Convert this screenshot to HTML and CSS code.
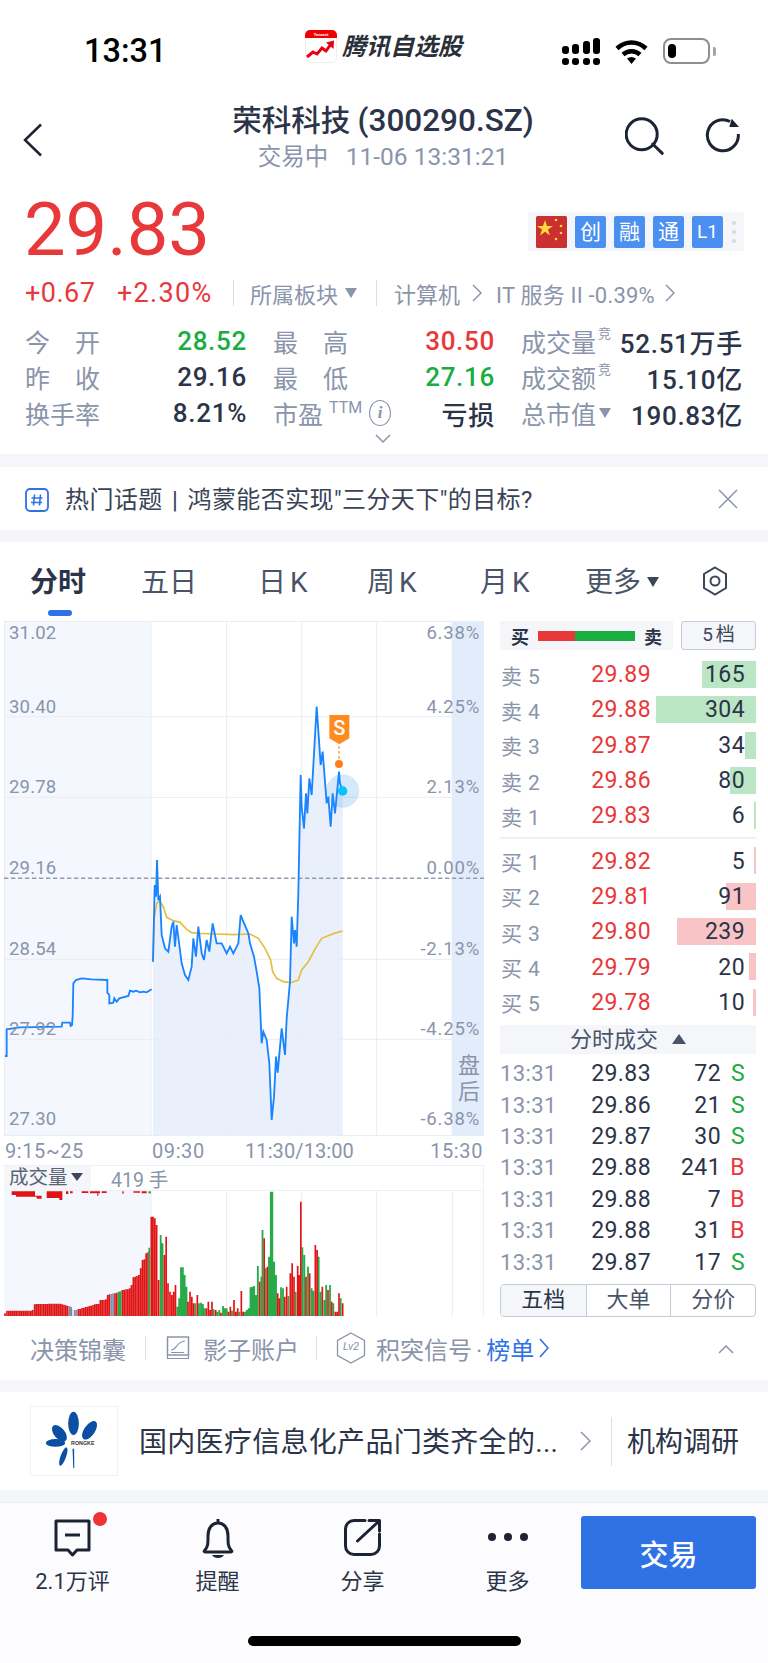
FILE: index.html
```html
<!DOCTYPE html>
<html lang="zh-CN">
<head>
<meta charset="utf-8">
<title>荣科科技</title>
<link rel="stylesheet" href="styles.css">
</head>
<body>
<div class="page">
  <header class="status">
    <span class="clock">13:31</span>
    <div class="brand">
      <svg class="brand-icon" viewBox="0 0 32 33">
        <rect x=".5" y=".5" width="31" height="32" rx="5" fill="#fff" stroke="#eeeeee"/>
        <path d="M0 8V5a5 5 0 0 1 5-5h22a5 5 0 0 1 5 5v3z" fill="#f00000"/>
        <text x="16" y="6" class="brand-mini" text-anchor="middle">Tencent</text>
        <path d="M2 27L8 22 12 24 17 18 21 21 26 14" fill="none" stroke="#e60012" stroke-width="3"/>
        <path d="M21 12.500l8-2-.5 8.500z" fill="#e60012"/>
      </svg>
      <span class="brand-name">腾讯自选股</span>
    </div>
    <svg class="signal" viewBox="0 0 38 27">
      <g fill="#000">
        <rect x="0" y="20" width="7" height="7" rx="3"/><rect x="10" y="20" width="7" height="7" rx="3"/><rect x="21" y="20" width="7" height="7" rx="3"/><rect x="31" y="20" width="7" height="7" rx="3"/>
        <rect x="0" y="8" width="7" height="8" rx="3"/><rect x="10" y="6" width="7" height="10" rx="3"/><rect x="21" y="3" width="7" height="13" rx="3"/><rect x="31" y="0" width="7" height="16" rx="3"/>
      </g>
    </svg>
    <svg class="wifi" viewBox="0 0 33 25">
      <path d="M2 9.500C10.500 1.500 22.500 1.500 31 9.500" fill="none" stroke="#000" stroke-width="4.500"/>
      <path d="M8 15.500C13 11 20 11 25 15.500" fill="none" stroke="#000" stroke-width="4.500"/>
      <path d="M12 19.500C15 17.500 18 17.500 21 19.500L16.500 25z" fill="#000"/>
    </svg>
    <div class="battery"><span class="battery-level"></span></div>
    <span class="battery-tip"></span>
  </header>

  <nav class="nav">
    <svg class="back" viewBox="0 0 20 34"><path d="M18 1.500L2 17l16 15.500" fill="none" stroke="#1c2333" stroke-width="2.500"/></svg>
    <div class="nav-title">
      <div class="stock-name">荣科科技 <span class="stock-code">(300290.SZ)</span></div>
      <div class="stock-sub">交易中 &nbsp; <span class="stock-time">11-06 13:31:21</span></div>
    </div>
    <svg class="nav-search" viewBox="0 0 40 40"><circle cx="16.700" cy="17.300" r="15.500" fill="none" stroke="#1c2333" stroke-width="3"/><path d="M27.700 27l9.600 9.300" stroke="#1c2333" stroke-width="3" stroke-linecap="round"/></svg>
    <svg class="nav-refresh" viewBox="0 0 36 38"><path d="M25 4.500A15.500 15.500 0 1 0 33.300 17" fill="none" stroke="#1c2333" stroke-width="3"/><path d="M26.700 1.700L34 10H24.300z" fill="#1c2333"/></svg>
  </nav>

  <section class="quote">
    <div class="price-row">
      <div class="price">29.83</div>
      <div class="tags">
        <svg class="flag" viewBox="0 0 31 32"><rect width="31" height="32" rx="1.500" fill="#c9302f"/><path d="M9 4l2 6h6l-5 3.500 2 6-5-3.700-5 3.700 2-6L1 10h6z" fill="#ffd93b"/><g fill="#ffd93b"><circle cx="20" cy="4" r="1.300"/><circle cx="25" cy="10" r="1.300"/><circle cx="25" cy="17" r="1.300"/><circle cx="20" cy="23" r="1.300"/></g></svg>
        <span class="chip">创</span><span class="chip">融</span><span class="chip">通</span><span class="chip chip-l">L1</span>
        <span class="tag-more"><i></i><i></i><i></i></span>
      </div>
    </div>
    <div class="change-row">
      <span class="chg">+0.67</span>
      <span class="chg chg-pct">+2.30%</span>
      <span class="sep sep-a"></span>
      <span class="sector">所属板块</span><span class="caret"></span>
      <span class="sep sep-b"></span>
      <span class="sector sector-b">计算机</span><svg class="mini-chev chev-a" viewBox="0 0 10 18"><path d="M1 1l8 8-8 8" fill="none" stroke="#8a94ab" stroke-width="1.500"/></svg>
      <span class="sector sector-c">IT 服务 II -0.39%</span><svg class="mini-chev chev-b" viewBox="0 0 10 18"><path d="M1 1l8 8-8 8" fill="none" stroke="#8a94ab" stroke-width="1.500"/></svg>
    </div>
    <div class="stats">
      <div class="stat"><span class="lbl lbl-j">今 开</span><span class="val up-g">28.52</span></div>
      <div class="stat"><span class="lbl lbl-j">最 高</span><span class="val up-r">30.50</span></div>
      <div class="stat"><span class="lbl">成交量<sup class="sup">竞</sup></span><span class="val">52.51万手</span></div>
      <div class="stat"><span class="lbl lbl-j">昨 收</span><span class="val">29.16</span></div>
      <div class="stat"><span class="lbl lbl-j">最 低</span><span class="val up-g">27.16</span></div>
      <div class="stat"><span class="lbl">成交额<sup class="sup">竞</sup></span><span class="val">15.10亿</span></div>
      <div class="stat"><span class="lbl">换手率</span><span class="val">8.21%</span></div>
      <div class="stat"><span class="lbl">市盈<span class="ttm">TTM</span><span class="info">i</span></span><span class="val">亏损</span></div>
      <div class="stat"><span class="lbl">总市值<span class="caret caret-s"></span></span><span class="val">190.83亿</span></div>
    </div>
    <svg class="expand" viewBox="0 0 16 10"><path d="M1 1l7 7 7-7" fill="none" stroke="#8a94ab" stroke-width="1.500"/></svg>
  </section>

  <div class="gap gap-13"></div>

  <section class="topic">
    <svg class="topic-icon" viewBox="0 0 24 24"><rect x="1" y="1" width="22" height="22" rx="4" fill="none" stroke="#2f72e6" stroke-width="1.800"/><path d="M9.500 6.500l-1 11M15.500 6.500l-1 11M6.500 10h11M6 14.500h11" stroke="#2f72e6" stroke-width="1.600"/></svg>
    <span class="topic-text">热门话题 | 鸿蒙能否实现"三分天下"的目标?</span>
    <svg class="topic-close" viewBox="0 0 20 20"><path d="M1 1l18 18M19 1L1 19" stroke="#8a94ab" stroke-width="1.500"/></svg>
  </section>

  <div class="gap gap-12"></div>

  <div class="tabs">
    <span class="tab tab-on">分时</span>
    <span class="tab">五日</span>
    <span class="tab">日 K</span>
    <span class="tab">周 K</span>
    <span class="tab">月 K</span>
    <span class="tab">更多<span class="caret caret-d"></span></span>
    <svg class="tab-set" viewBox="0 0 26 30"><path d="M13 1.500l11 6.500v14l-11 6.500L2 22V8z" fill="none" stroke="#3d4659" stroke-width="2"/><circle cx="13" cy="15" r="4.500" fill="none" stroke="#3d4659" stroke-width="2"/></svg>
  </div>

  <main class="market">
    <div class="left">
      <div class="chart">
        <svg class="chart-svg" viewBox="12 33 1440 1545">
          <rect x="12" y="33" width="441" height="1545" fill="#f4f7fd"/>
          <rect x="1355" y="33" width="97" height="1545" fill="#e2edfc"/>
          <path d="M459 1578L459 1055 464 825 468 860 471 750 475 870 480 860 485 975 495 1015 505 1025 515 950 520 935 525 1010 530 945 538 1005 545 1060 555 1095 565 1110 575 1070 580 985 588 1040 595 950 605 1030 612 1050 620 990 628 1025 638 940 650 1000 665 1000 680 1030 690 1010 700 1030 715 1000 722 915 730 935 745 970 750 1000 762 1040 770 1085 778 1135 785 1300 790 1265 800 1290 808 1360 815 1530 822 1460 828 1340 833 1388 845 1255 855 1335 860 1225 870 1115 875 920 882 1000 885 960 890 1010 895 850 902 495 905 590 912 655 918 550 922 610 928 505 935 555 950 290 962 465 968 425 980 580 985 560 992 650 998 550 1005 610 1017 485 1020 520 1028 543V1578z" fill="#e9f0fc"/>
          <path d="M453 33V1578M680 33V1578M905 33V1578M1130 33V1578M12 320H1452M12 562H1452M12 1048H1452M12 1288H1452" stroke="#e9ecf3" stroke-width="3" fill="none"/>
          <rect x="13.500" y="34.500" width="1437" height="1542" fill="none" stroke="#e9ecf3" stroke-width="3"/>
          <path d="M12 805H1452" stroke="#939bae" stroke-width="4.500" stroke-dasharray="13 8" fill="none"/>
          <path d="M15 1338H20V1258L60 1252 185 1250 187 1238H210L212 1248 216 1245 218 1218 220 1120 228 1110 245 1105 275 1108 322 1110V1148L328 1155V1180L340 1178 343 1165 350 1175 358 1165 385 1158 390 1142 400 1145 408 1142 420 1147 430 1145 440 1147 455 1138" fill="none" stroke="#1a84ff" stroke-width="5.500"/>
          <path d="M459 1055L462 930 470 880 478 872 490 890 500 922 520 932 540 937 560 958 575 968 600 970 650 972 700 974 750 972 775 985 795 1015 812 1050 818 1085 830 1105 850 1115 872 1118 895 1110 905 1080 925 1055 948 1012 965 985 990 975 1010 968 1028 963" fill="none" stroke="#e2bf3d" stroke-width="5"/>
          <path d="M459 1055L464 825 468 860 471 750 475 870 480 860 485 975 495 1015 505 1025 515 950 520 935 525 1010 530 945 538 1005 545 1060 555 1095 565 1110 575 1070 580 985 588 1040 595 950 605 1030 612 1050 620 990 628 1025 638 940 650 1000 665 1000 680 1030 690 1010 700 1030 715 1000 722 915 730 935 745 970 750 1000 762 1040 770 1085 778 1135 785 1300 790 1265 800 1290 808 1360 815 1530 822 1460 828 1340 833 1388 845 1255 855 1335 860 1225 870 1115 875 920 882 1000 885 960 890 1010 895 850 902 495 905 590 912 655 918 550 922 610 928 505 935 555 950 290 962 465 968 425 980 580 985 560 992 650 998 550 1005 610 1017 485 1020 520 1028 543" fill="none" stroke="#1a84ff" stroke-width="5.500"/>
          <circle cx="1028" cy="543" r="50" fill="#2f8fe6" fill-opacity=".2"/>
          <circle cx="1028" cy="543" r="14" fill="#00c3ff"/>
          <path d="M988 315H1048V385L1018 403 988 385z" fill="#ff8a1f"/>
          <text x="1018" y="376" class="flag-s" text-anchor="middle">S</text>
          <path d="M1017 408V450" stroke="#ff9c4a" stroke-width="4" stroke-dasharray="9 6"/>
          <circle cx="1017" cy="462" r="12" fill="#ff7f1f"/>
        </svg>
        <span class="ax ax-l ay1">31.02</span><span class="ax ax-l ay2">30.40</span><span class="ax ax-l ay3">29.78</span><span class="ax ax-l ay4">29.16</span><span class="ax ax-l ay5">28.54</span><span class="ax ax-l ay6">27.92</span><span class="ax ax-l ay7">27.30</span>
        <span class="ax ax-r ay1">6.38%</span><span class="ax ax-r ay2">4.25%</span><span class="ax ax-r ay3">2.13%</span><span class="ax ax-r ay4">0.00%</span><span class="ax ax-r ay5">-2.13%</span><span class="ax ax-r ay6">-4.25%</span><span class="ax ax-r ay7">-6.38%</span>
        <span class="after">盘后</span>
      </div>
      <div class="axis">
        <span class="t t1">9:15~25</span><span class="t t2">09:30</span><span class="t t3">11:30/13:00</span><span class="t t4">15:30</span>
      </div>
      <div class="vol-head"><span class="vol-sel">成交量<span class="caret caret-v"></span></span><span class="vol-val">419 手</span></div>
      <svg class="vol" viewBox="12 93 1440 375">
        <rect x="12" y="93" width="441" height="375" fill="#f4f7fd"/>
        <path d="M453 93V468M680 93V468M905 93V468M1130 93V468M1357 93V468M1451 93V468" stroke="#e9ecf3" stroke-width="3"/>
        <path d="M15 468V460M21 468V452M26.500 468V452M32 468V452M37.500 468V452M43 468V452M48.500 468V452M54 468V452M59.500 468V452M65 468V452M70.500 468V452M76 468V452M81.500 468V452M87 468V452M92.500 468V452M98 468V450M104 468V433M109.500 468V432M115 468V432M120.500 468V432M126 468V432M131.500 468V432M137 468V432M142.500 468V432M148 468V431M153.500 468V431M159 468V431M164.500 468V431M170 468V431M175.500 468V431M181 468V431M186.500 468V433M192 468V434M197.500 468V436M203 468V438M214 468V446M235 468V447M240.500 468V447M246 468V444M251.500 468V443M257 468V441M262.500 468V440M268 468V438M273.500 468V437M279 468V435M284.500 468V433M290 468V432M295.500 468V432M301 468V420M306.500 468V420M312 468V420M317.500 468V418M323 468V405M328.500 468V403M345 468V400M350.500 468V398M367 468V390M372.500 468V389M378 468V388M383.500 468V388M389 468V385M394.500 468V375M400 468V352M405.500 468V350M411 468V348M416.500 468V345M422 468V325M427.500 468V300M433 468V298M438.500 468V280M444 468V277" stroke="#e01414" stroke-width="5" fill="none"/>
        <path d="M208 468V439M213 468V440M224 468V450M229.500 468V450M334 468V402M339.500 468V400" stroke="#8190ad" stroke-width="5" fill="none"/>
        <path d="M356 468V395M361.500 468V394" stroke="#27ab4a" stroke-width="5.500" fill="none"/>
        <path d="M35 94H105V107H125V116H110V110H48V105H35zM140 94H187V120H178V114H140zM198 94H205V102H198zM210 94H218V100H210zM245 94H265V99H245zM270 94H300V100H295V108H292V100H270zM305 94H320V99H305zM367 94H371V101H367zM400 94H420V98H400zM425 94H440V100H425z" fill="#e01414"/>
        <path d="M445 94H453V100H445z" fill="#27ab4a"/>
        <path d="M448 468V263M482 468V225M487.500 468V250M532 468V440M537.500 468V415M543 468V322M548.500 468V322M554 468V345M559.500 468V380M586 468V430M597 468V430M603 468V428M608.500 468V432M614 468V445M641 468V448M652 468V455M658 468V450M669 468V438M674.500 468V445M680 468V445M696 468V452M718 468V455M735 468V455M740.500 468V450M746 468V445M751.500 468V382M757 468V380M762.500 468V378M768 468V405M773.500 468V318M784 468V350M787.500 468V210M797 468V325M807 468V290M812.500 468V95M817 468V95M822.500 468V305M828 468V345M843 468V382M849 468V385M865 468V408M887 468V395M907 468V262M913 468V285M924 468V320M935 468V385M940.500 468V392M956 468V290M962 468V395M973 468V420M978.500 468V375M990 468V375M1000 468V430M1022 468V415" stroke="#27ab4a" stroke-width="5.500" fill="none"/>
        <path d="M454 468V170M459 468V170M464.500 468V175M470 468V195M476 468V360M493 468V285M498.500 468V230M504 468V370M510 468V395M515.500 468V405M521 468V395M526.500 468V375M564 468V425M570 468V395M575.500 468V410M581 468V430M592 468V405M619 468V445M625 468V425M630.500 468V450M636 468V425M647 468V450M663 468V458M685 468V455M691 468V440M702 468V420M707.500 468V455M713 468V445M724 468V393M729.500 468V455M779 468V365M792.500 468V235M802 468V320M833 468V400M838.500 468V415M854 468V410M860 468V380M871 468V340M876.500 468V310M882 468V350M893 468V318M898 468V345M902.500 468V125M918 468V350M929 468V340M946 468V255M951.500 468V270M967 468V380M984 468V390M995 468V425M1006 468V455M1011.500 468V455M1017 468V400M1028 468V430" stroke="#e01414" stroke-width="5" fill="none"/>
      </svg>
    </div>

    <aside class="right">
      <div class="book-top">
        <div class="ratio"><span class="ratio-t">买</span><span class="ratio-bar"><i class="rb-r"></i><i class="rb-g"></i></span><span class="ratio-t">卖</span></div>
        <span class="levels">5 档</span>
      </div>
      <div class="book book-ask">
        <div class="lv"><i class="bar bar-g" style="width:54px"></i><span class="lv-n">卖 5</span><span class="lv-p">29.89</span><span class="lv-q">165</span></div>
        <div class="lv"><i class="bar bar-g" style="width:100px"></i><span class="lv-n">卖 4</span><span class="lv-p">29.88</span><span class="lv-q">304</span></div>
        <div class="lv"><i class="bar bar-g" style="width:11px"></i><span class="lv-n">卖 3</span><span class="lv-p">29.87</span><span class="lv-q">34</span></div>
        <div class="lv"><i class="bar bar-g" style="width:26px"></i><span class="lv-n">卖 2</span><span class="lv-p">29.86</span><span class="lv-q">80</span></div>
        <div class="lv"><i class="bar bar-g" style="width:2px"></i><span class="lv-n">卖 1</span><span class="lv-p">29.83</span><span class="lv-q">6</span></div>
      </div>
      <div class="book-sep"></div>
      <div class="book">
        <div class="lv"><i class="bar bar-r" style="width:2px"></i><span class="lv-n">买 1</span><span class="lv-p">29.82</span><span class="lv-q">5</span></div>
        <div class="lv"><i class="bar bar-r" style="width:30px"></i><span class="lv-n">买 2</span><span class="lv-p">29.81</span><span class="lv-q">91</span></div>
        <div class="lv"><i class="bar bar-r" style="width:79px"></i><span class="lv-n">买 3</span><span class="lv-p">29.80</span><span class="lv-q">239</span></div>
        <div class="lv"><i class="bar bar-r" style="width:7px"></i><span class="lv-n">买 4</span><span class="lv-p">29.79</span><span class="lv-q">20</span></div>
        <div class="lv"><i class="bar bar-r" style="width:3px"></i><span class="lv-n">买 5</span><span class="lv-p">29.78</span><span class="lv-q">10</span></div>
      </div>
      <div class="trade-head">分时成交<span class="caret-up"></span></div>
      <div class="trades">
        <div class="tr"><span class="tr-t">13:31</span><span class="tr-p">29.83</span><span class="tr-q">72</span><span class="tr-s up-g">S</span></div>
        <div class="tr"><span class="tr-t">13:31</span><span class="tr-p">29.86</span><span class="tr-q">21</span><span class="tr-s up-g">S</span></div>
        <div class="tr"><span class="tr-t">13:31</span><span class="tr-p">29.87</span><span class="tr-q">30</span><span class="tr-s up-g">S</span></div>
        <div class="tr"><span class="tr-t">13:31</span><span class="tr-p">29.88</span><span class="tr-q">241</span><span class="tr-s up-r">B</span></div>
        <div class="tr"><span class="tr-t">13:31</span><span class="tr-p">29.88</span><span class="tr-q">7</span><span class="tr-s up-r">B</span></div>
        <div class="tr"><span class="tr-t">13:31</span><span class="tr-p">29.88</span><span class="tr-q">31</span><span class="tr-s up-r">B</span></div>
        <div class="tr"><span class="tr-t">13:31</span><span class="tr-p">29.87</span><span class="tr-q">17</span><span class="tr-s up-g">S</span></div>
      </div>
      <div class="seg"><span class="seg-i seg-on">五档</span><span class="seg-i">大单</span><span class="seg-i">分价</span></div>
    </aside>
  </main>

  <section class="strip">
    <span class="strip-t strip-a">决策锦囊</span>
    <span class="strip-sep"></span>
    <svg class="strip-doc" viewBox="0 0 24 24"><rect x="1.500" y="1" width="21" height="18" fill="none" stroke="#8a94ab" stroke-width="1.500"/><path d="M1.500 19v3.500h21V19M5 14c6 0 5-8 14-9M5 16.500h13" fill="none" stroke="#8a94ab" stroke-width="1.200"/></svg>
    <span class="strip-t">影子账户</span>
    <span class="strip-sep strip-sep-b"></span>
    <span class="hexlv"><svg class="hex" viewBox="0 0 30 32"><path d="M15 1l13.500 7.500v15L15 31 1.500 23.500v-15z" fill="none" stroke="#8a94ab" stroke-width="1.300"/></svg><em class="lv2">Lv2</em></span>
    <span class="strip-t">积突信号<span class="dot">·</span><a class="blue">榜单</a></span>
    <svg class="blue-chev" viewBox="0 0 10 20"><path d="M1 1l8 9-8 9" fill="none" stroke="#2f72e6" stroke-width="1.600"/></svg>
    <svg class="strip-up" viewBox="0 0 16 9"><path d="M1 8l7-7 7 7" fill="none" stroke="#8a94ab" stroke-width="1.500"/></svg>
  </section>

  <div class="gap gap-12"></div>

  <section class="feed">
    <div class="logo">
      <svg viewBox="0 0 88 70">
        <g fill="#0b4ea2">
          <ellipse cx="43.500" cy="17" rx="5.500" ry="12"/>
          <ellipse cx="29" cy="27" rx="5.500" ry="10" transform="rotate(-40 29 27)"/>
          <ellipse cx="60" cy="24" rx="5.500" ry="11" transform="rotate(35 60 24)"/>
          <ellipse cx="25" cy="37" rx="10" ry="4"/>
          <ellipse cx="33" cy="51" rx="2.800" ry="10" transform="rotate(20 33 51)"/>
          <path d="M42.500 43h1.600l.2 20h-1z"/>
        </g>
        <text x="41" y="39" class="logo-t">RONGKE</text>
      </svg>
    </div>
    <span class="feed-text">国内医疗信息化产品门类齐全的...</span>
    <svg class="feed-chev" viewBox="0 0 11 20"><path d="M1 1l9 9-9 9" fill="none" stroke="#8a94ab" stroke-width="1.500"/></svg>
    <span class="feed-sep"></span>
    <span class="feed-tag">机构调研</span>
  </section>

  <div class="gap gap-12"></div>

  <footer class="tabbar">
    <div class="bar-item">
      <span class="bar-ico">
        <svg class="ico-c" viewBox="0 0 40 38"><path d="M3 2h33v29H24l-4.500 5-4.500-5H3z" fill="none" stroke="#1c2333" stroke-width="3" stroke-linejoin="round"/><path d="M12 16h15" stroke="#1c2333" stroke-width="3"/></svg>
        <i class="red-dot"></i>
      </span>
      <span class="bar-lbl">2.1万评</span>
    </div>
    <div class="bar-item">
      <span class="bar-ico">
        <svg class="ico-b" viewBox="0 0 40 42"><path d="M20 2v3M7 33c3-3 3-7 3-14 0-8 4-13 10-13s10 5 10 13c0 7 0 11 3 14 1.500 1.500 1 2-1 2H8c-2 0-2.500-.5-1-2z" fill="none" stroke="#1c2333" stroke-width="3"/><path d="M14 38h12c-2 4-10 4-12 0z" fill="#1c2333"/></svg>
      </span>
      <span class="bar-lbl">提醒</span>
    </div>
    <div class="bar-item">
      <span class="bar-ico">
        <svg class="ico-s" viewBox="0 0 38 38"><g fill="none" stroke="#1c2333" stroke-width="3" stroke-linecap="round" stroke-linejoin="round"><path d="M21 1.500H10A8.500 8.500 0 0 0 1.500 10V27a8.500 8.500 0 0 0 8.500 8.500H27A8.500 8.500 0 0 0 35.500 27V15"/><path d="M13.500 22L33 4"/><path d="M25 1.500H35.500V12"/></g></svg>
      </span>
      <span class="bar-lbl">分享</span>
    </div>
    <div class="bar-item">
      <span class="bar-ico">
        <svg class="ico-m" viewBox="0 0 42 10"><circle cx="5" cy="5" r="4" fill="#1c2333"/><circle cx="21" cy="5" r="4" fill="#1c2333"/><circle cx="37" cy="5" r="4" fill="#1c2333"/></svg>
      </span>
      <span class="bar-lbl">更多</span>
    </div>
    <button class="trade-btn">交易</button>
    <span class="home"></span>
  </footer>
</div>
</body>
</html>
```

FILE: styles.css
```css
* { box-sizing: border-box; }
html, body { margin: 0; padding: 0; background: #fff; }
body { font-family: Roboto, "Noto Sans CJK SC", sans-serif; color: #2b3448; }
.page { width: 768px; height: 1663px; overflow: hidden; position: relative; background: #fff; }
svg { display: block; }
i { display: block; }

.up-g { color: #1aad3f; }
.up-r { color: #e8383a; }

.status { height: 96px; display: flex; align-items: flex-start; position: relative; }
.clock { margin: 33px 0 0 84px; font: 500 32.500px/36px Roboto, sans-serif; color: #000; width: 221px; }
.brand { display: flex; align-items: flex-start; margin-top: 30px; width: 257px; }
.brand-icon { width: 32px; height: 33px; }
.brand-mini { font: 700 4px Roboto, sans-serif; fill: #fff; }
.brand-name { margin: -1px 0 0 5px; font: italic 700 24px/32px "Noto Sans CJK SC", sans-serif; color: #2b2f3a; white-space: nowrap; }
.signal { width: 38px; height: 27px; margin-top: 38px; }
.wifi { width: 33px; height: 25px; margin: 39px 0 0 15px; }
.battery { width: 47px; height: 26px; margin: 38px 0 0 15px; border: 2px solid #8e8e8e; border-radius: 8px; padding: 4px 0 0 3px; }
.battery-level { display: block; width: 8px; height: 14px; border-radius: 4px; background: #000; }
.battery-tip { width: 3px; height: 9px; margin: 47px 0 0 3px; background: #a5a5a5; border-radius: 0 2px 2px 0; }

.nav { height: 80px; position: relative; }
.back { position: absolute; left: 23px; top: 27px; width: 20px; height: 34px; }
.nav-title { text-align: center; padding-top: 7px; margin-left: -2px; }
.stock-name { font-size: 29.500px; line-height: 36px; font-weight: 500; color: #2b3448; }
.stock-code { font-size: 31.500px; }
.stock-sub { font-size: 23.500px; line-height: 30px; color: #8a94ab; margin-top: 3px; }
.stock-time { font-size: 24.500px; }
.nav-search { position: absolute; left: 625px; top: 21px; width: 40px; height: 40px; }
.nav-refresh { position: absolute; left: 705px; top: 21px; width: 36px; height: 38px; }

.quote { height: 278px; position: relative; }
.price-row { display: flex; justify-content: space-between; height: 97px; padding: 19px 24px 0 24px; }
.price { font-size: 74px; line-height: 70px; color: #e8383a; }
.tags { width: 216px; height: 39px; margin-top: 17px; background: #f4f6fa; display: flex; gap: 8px; align-items: center; padding-left: 8px; }
.flag { width: 31px; height: 32px; }
.chip { width: 31px; height: 32px; border-radius: 2px; background: #4b8ff0; color: #fff; font-size: 21px; line-height: 32px; text-align: center; }
.chip-l { font-size: 19px; }
.tag-more { display: flex; flex-direction: column; gap: 5px; margin-left: 1px; }
.tag-more i { width: 4px; height: 4px; border-radius: 50%; background: #d4d8e0; }

.change-row { height: 40px; display: flex; align-items: center; padding-left: 25px; }
.chg { font-size: 27px; letter-spacing: .5px; color: #e8383a; width: 70px; white-space: nowrap; }
.chg-pct { margin-left: 22px; width: 97px; letter-spacing: 1.300px; }
.sep { width: 1px; height: 26px; background: #d9dde5; }
.sep-a { margin: 0 16px 0 19px; }
.sep-b { margin: 0 17px 0 19px; }
.sector { font-size: 22px; color: #8a94ab; white-space: nowrap; }
.sector-c { letter-spacing: .2px; }
.caret { display: inline-block; width: 0; height: 0; margin-left: 7px; border-left: 6.500px solid transparent; border-right: 6.500px solid transparent; border-top: 10px solid #8a94ab; }
.mini-chev { width: 10px; height: 18px; }
.chev-a { margin: 0 14px 0 12px; }
.chev-b { margin-left: 10px; }

.stats { display: grid; grid-template-columns: 222px 222px 222px; grid-auto-rows: 36px; column-gap: 26px; padding: 10px 0 0 25px; }
.stat { display: flex; justify-content: space-between; align-items: center; white-space: nowrap; }
.lbl { font-size: 25px; color: #8a94ab; display: inline-flex; align-items: center; position: relative; }
.lbl-j { width: 75px; display: inline-block; text-align-last: justify; }
.val { font-size: 26px; letter-spacing: .7px; font-weight: 500; }
.sup { font-size: 13px; line-height: 13px; align-self: flex-start; margin: 4px 0 0 2px; }
.ttm { font-size: 16px; margin-left: 6px; align-self: flex-start; margin-top: 3px; line-height: 20px; }
.info { width: 22px; height: 26px; border: 1.500px solid #8a94ab; border-radius: 50%; margin-left: 7px; font: italic 700 17px/23px "Liberation Serif", serif; text-align: center; }
.caret-s { margin-left: 3px; }
.expand { position: absolute; left: 375px; top: 258px; width: 16px; height: 10px; }

.gap { background: #f4f6fa; }
.gap-13 { height: 13px; }
.gap-12 { height: 12px; }

.topic { height: 63px; display: flex; align-items: center; padding-left: 25px; position: relative; }
.topic-icon { width: 24px; height: 24px; margin-top: 2px; }
.topic-text { margin: -3px 0 0 16px; font-size: 24px; letter-spacing: .4px; word-spacing: 3px; color: #3a4356; white-space: nowrap; }
.topic-close { position: absolute; left: 718px; top: 22px; width: 20px; height: 20px; }

.tabs { height: 79px; display: grid; grid-template-columns: 111px 117px 109px 113px 105px 117px 26px; align-items: center; padding: 0 0 0 30px; font-size: 28px; color: #4a5468; }
.tab { position: relative; white-space: nowrap; line-height: 40px; margin-top: 2px; word-spacing: -3px; }
.tab-on { font-weight: 700; color: #2b3448; }
.tab-on::after { content: ""; position: absolute; left: 18px; top: 47px; width: 24px; height: 6px; border-radius: 3px; background: #2f72e6; }
.caret-d { margin-left: 6px; vertical-align: 5px; border-top-color: #3d4659; }
.tab-set { width: 26px; height: 30px; margin-top: -2px; }

.market { height: 695px; display: flex; padding-left: 4px; }
.left { width: 480px; }
.chart { height: 515px; position: relative; }
.chart-svg { width: 480px; height: 515px; }
.flag-s { font: 500 60px Roboto, sans-serif; fill: #fff; }
.ax { position: absolute; font-size: 18.500px; line-height: 22px; color: #8a94ab; letter-spacing: .2px; }
.ax-l { left: 5px; }
.ax-r { right: 4px; letter-spacing: .8px; }
.ay1 { top: 1px; }
.ay2 { top: 75px; }
.ay3 { top: 155px; }
.ay4 { top: 236px; }
.ay5 { top: 317px; }
.ay6 { top: 397px; }
.ay7 { top: 487px; }
.after { position: absolute; left: 453px; top: 432px; width: 24px; font-size: 22px; line-height: 26px; color: #8a94ab; text-align: center; }
.axis { height: 29px; display: flex; align-items: center; font-size: 20px; color: #8a94ab; position: relative; letter-spacing: .6px; }
.t { position: absolute; top: 3px; line-height: 24px; white-space: nowrap; }
.t1 { left: 1px; }
.t2 { left: 148px; }
.t3 { left: 241px; letter-spacing: .1px; }
.t4 { right: 1px; }
.vol-head { height: 26px; border: 1px solid #eef0f5; border-width: 1px 1px 1px 0; display: flex; align-items: center; font-size: 19.500px; color: #8a94ab; }
.vol-sel { background: #f4f6fa; height: 24px; width: 87px; padding-left: 5px; color: #5a6478; line-height: 24px; white-space: nowrap; }
.caret-v { margin-left: 3px; vertical-align: 3px; border-left-width: 6px; border-right-width: 6px; border-top: 8px solid #3d4659; }
.vol-val { margin-left: 20px; }
.vol { width: 480px; height: 125px; }

.right { width: 256px; margin-left: 16px; }
.book-top { height: 29px; display: flex; justify-content: space-between; }
.ratio { width: 173px; background: #f4f6fa; display: flex; align-items: center; padding-left: 11px; }
.ratio-t { font-size: 18px; font-weight: 700; color: #2b3448; }
.ratio-bar { width: 97px; height: 10px; display: flex; margin: 0 9px; }
.rb-r { width: 37px; background: #e8383a; }
.rb-g { flex: 1; background: #1aad3f; }
.levels { width: 75px; border: 1.500px solid #c5cbd8; border-radius: 3px; background: #f4f6fa; font-size: 19px; line-height: 26px; text-align: center; color: #3d4659; word-spacing: -2px; }
.book-ask { margin-top: 7px; }
.book-sep { height: 2px; margin: 4px 0 4px; background: #eef0f5; }
.lv { height: 35.300px; display: grid; grid-template-columns: 60px 91px 94px 11px; align-items: center; position: relative; font-size: 23px; letter-spacing: .4px; }
.bar { position: absolute; right: 0; top: 4px; height: 27px; }
.bar-g { background: #bbe6c5; }
.bar-r { background: #f8c4c5; }
.lv-n { font-size: 21px; color: #8a94ab; position: relative; white-space: nowrap; padding-left: 1px; }
.lv-p { grid-column: 2; text-align: right; color: #e8383a; position: relative; }
.lv-q { text-align: right; position: relative; color: #2b3448; }
.trade-head { height: 29px; margin-top: 5px; background: #f4f6fa; text-align: center; font-size: 22px; line-height: 30px; color: #4a5468; }
.caret-up { display: inline-block; margin-left: 14px; vertical-align: 3px; border-left: 7px solid transparent; border-right: 7px solid transparent; border-bottom: 10px solid #4a5468; }
.trades { margin-top: 4px; }
.tr { height: 31.400px; display: grid; grid-template-columns: 60px 91px 70px 24px 11px; align-items: center; font-size: 23px; letter-spacing: .4px; color: #2b3448; }
.tr-t { color: #8a94ab; font-size: 22px; }
.tr-p, .tr-q, .tr-s { text-align: right; }
.seg { height: 33px; margin-top: 6px; border: 1.500px solid #c5cbd8; border-radius: 4px; display: grid; grid-template-columns: 1fr 1fr 1fr; font-size: 22px; line-height: 29px; text-align: center; color: #4a5468; overflow: hidden; }
.seg-i + .seg-i { border-left: 1.500px solid #c5cbd8; }
.seg-on { background: #f4f6fa; color: #2b3448; }

.strip { height: 64px; display: flex; align-items: center; padding-left: 30px; position: relative; }
.strip-t { font-size: 24px; color: #8a94ab; white-space: nowrap; }
.strip-sep { width: 1px; height: 24px; background: #dde0e7; margin: 0 20px 0 19px; }
.strip-sep-b { margin-left: 17px; margin-right: 19px; }
.strip-doc { width: 24px; height: 24px; margin-right: 13px; }
.hexlv { position: relative; width: 30px; height: 32px; margin-right: 10px; }
.hex { width: 30px; height: 32px; }
.lv2 { position: absolute; left: 0; right: 0; top: 7px; text-align: center; font-size: 11px; line-height: 16px; color: #8a94ab; }
.dot { margin: 0 4px; }
.blue { color: #2f72e6; }
.blue-chev { width: 10px; height: 20px; margin-left: 5px; }
.strip-up { position: absolute; left: 718px; top: 29px; width: 16px; height: 9px; }

.feed { height: 98px; display: flex; align-items: center; padding-left: 30px; }
.logo { width: 88px; height: 70px; border: 1px solid #f2f2f2; }
.logo svg { width: 86px; height: 68px; }
.logo-t { font: 700 5.500px "Liberation Sans", sans-serif; fill: #333; }
.feed-text { margin: -2px 0 0 21px; width: 421px; font-size: 28px; color: #2b3448; white-space: nowrap; letter-spacing: .3px; }
.feed-chev { width: 11px; height: 20px; margin-left: 20px; }
.feed-sep { width: 1px; height: 49px; background: #dde0e7; margin: 0 15px 0 20px; }
.feed-tag { margin-top: -2px; font-size: 28px; color: #2b3448; white-space: nowrap; }

.tabbar { height: 161px; background: #fcfcfe; border-top: 1.500px solid #eceef2; display: grid; grid-template-columns: 145px 145px 145px 145px 175px; align-items: start; position: relative; }
.bar-item { display: flex; flex-direction: column; align-items: center; }
.bar-ico { height: 44px; margin-top: 13px; width: 44px; position: relative; display: flex; align-items: center; justify-content: center; }
.ico-c { width: 40px; height: 38px; }
.ico-b { width: 40px; height: 42px; }
.ico-s { width: 38px; height: 38px; }
.ico-m { width: 42px; height: 10px; margin-top: -2px; }
.red-dot { position: absolute; left: 42px; top: -4px; width: 14px; height: 14px; border-radius: 50%; background: #ee3235; border: 0; }
.bar-lbl { margin-top: 7px; font-size: 22px; line-height: 30px; color: #2b3448; white-space: nowrap; }
.trade-btn { margin: 13px 0 0 1px; width: 175px; height: 73px; border: 0; border-radius: 3px; background: #2f72e6; color: #fff; font: 500 29px "Noto Sans CJK SC", sans-serif; padding: 0; }
.home { position: absolute; left: 248px; top: 133px; width: 273px; height: 10px; border-radius: 5px; background: #000; }
```
